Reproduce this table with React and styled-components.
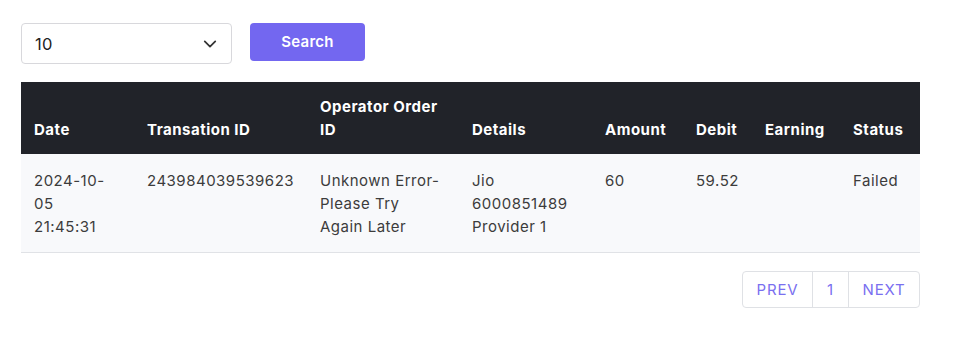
import React from "react";
import styled, { createGlobalStyle } from "styled-components";

const Global = createGlobalStyle`
  body {
    margin: 0;
    background: #fff;
    font-family: Inter, "Noto Sans", sans-serif;
    color: #3a3a3a;
  }
`;

const Page = styled.div`
  padding: 23px 36px 0 21px;
`;

const Toolbar = styled.div`
  display: flex;
  align-items: flex-start;
  gap: 18px;
  margin-bottom: 18px;
`;

const SelectBox = styled.div`
  width: 211px;
  height: 41px;
  box-sizing: border-box;
  border: 1px solid #d8d8dc;
  border-radius: 4px;
  display: flex;
  align-items: center;
  justify-content: space-between;
  padding: 0 14px 0 13px;
  font-size: 16.5px;
  letter-spacing: 0.3px;
  color: #222;
`;

const SearchButton = styled.button`
  width: 115px;
  height: 38px;
  border: none;
  border-radius: 4px;
  background: #7367f0;
  color: #fff;
  font-family: inherit;
  font-size: 15px;
  font-weight: 600;
  letter-spacing: 0.3px;
  padding: 0 0 2px;
  cursor: pointer;
`;

const Table = styled.table`
  width: 899px;
  border-collapse: collapse;
  font-size: 15px;
  letter-spacing: 0.5px;
  line-height: 23px;
`;

const Th = styled.th`
  background: #212329;
  color: #fff;
  font-weight: 700;
  text-align: left;
  vertical-align: bottom;
  padding: 13px 12px 13px 13px;
  width: ${(p) => p.$w}px;
  box-sizing: border-box;
`;

const Row = styled.tr`
  background: #f8f9fb;
  border-bottom: 1px solid #e0e2e6;
`;

const Td = styled.td`
  vertical-align: top;
  padding: 15px 12px 14px 13px;
  color: #3c3c3c;
`;

const Pager = styled.div`
  display: flex;
  justify-content: flex-end;
  width: 899px;
  margin-top: 18px;
`;

const PageGroup = styled.div`
  display: flex;
  border: 1px solid #dfe1e5;
  border-radius: 4px;
  overflow: hidden;
`;

const PageBtn = styled.div`
  width: ${(p) => p.$w}px;
  height: 35px;
  display: flex;
  align-items: center;
  justify-content: center;
  color: #7a6ff0;
  font-size: 15px;
  letter-spacing: 0.8px;
  & + & {
    border-left: 1px solid #dfe1e5;
  }
`;

const columns = [
  ["Date", 113],
  ["Transation ID", 173],
  ["Operator Order ID", 152],
  ["Details", 133],
  ["Amount", 91],
  ["Debit", 69],
  ["Earning", 88],
  ["Status", 80],
];

export default function App() {
  return (
    <Page>
      <Global />
      <Toolbar>
        <SelectBox>
          <span>10</span>
          <svg width="14" height="14" viewBox="0 0 16 16" fill="none" stroke="#333" strokeWidth="2" strokeLinecap="round" strokeLinejoin="round">
            <path d="M2 5l6 6 6-6" />
          </svg>
        </SelectBox>
        <SearchButton>Search</SearchButton>
      </Toolbar>
      <Table>
        <thead>
          <tr>
            {columns.map(([name, w]) => (
              <Th key={name} $w={w}>{name}</Th>
            ))}
          </tr>
        </thead>
        <tbody>
          <Row>
            <Td>2024-10-05<br />21:45:31</Td>
            <Td>243984039539623</Td>
            <Td>Unknown Error-<br />Please Try<br />Again Later</Td>
            <Td>Jio<br />6000851489<br />Provider 1</Td>
            <Td>60</Td>
            <Td>59.52</Td>
            <Td></Td>
            <Td>Failed</Td>
          </Row>
        </tbody>
      </Table>
      <Pager>
        <PageGroup>
          <PageBtn $w={69}>PREV</PageBtn>
          <PageBtn $w={35}>1</PageBtn>
          <PageBtn $w={70}>NEXT</PageBtn>
        </PageGroup>
      </Pager>
    </Page>
  );
}
